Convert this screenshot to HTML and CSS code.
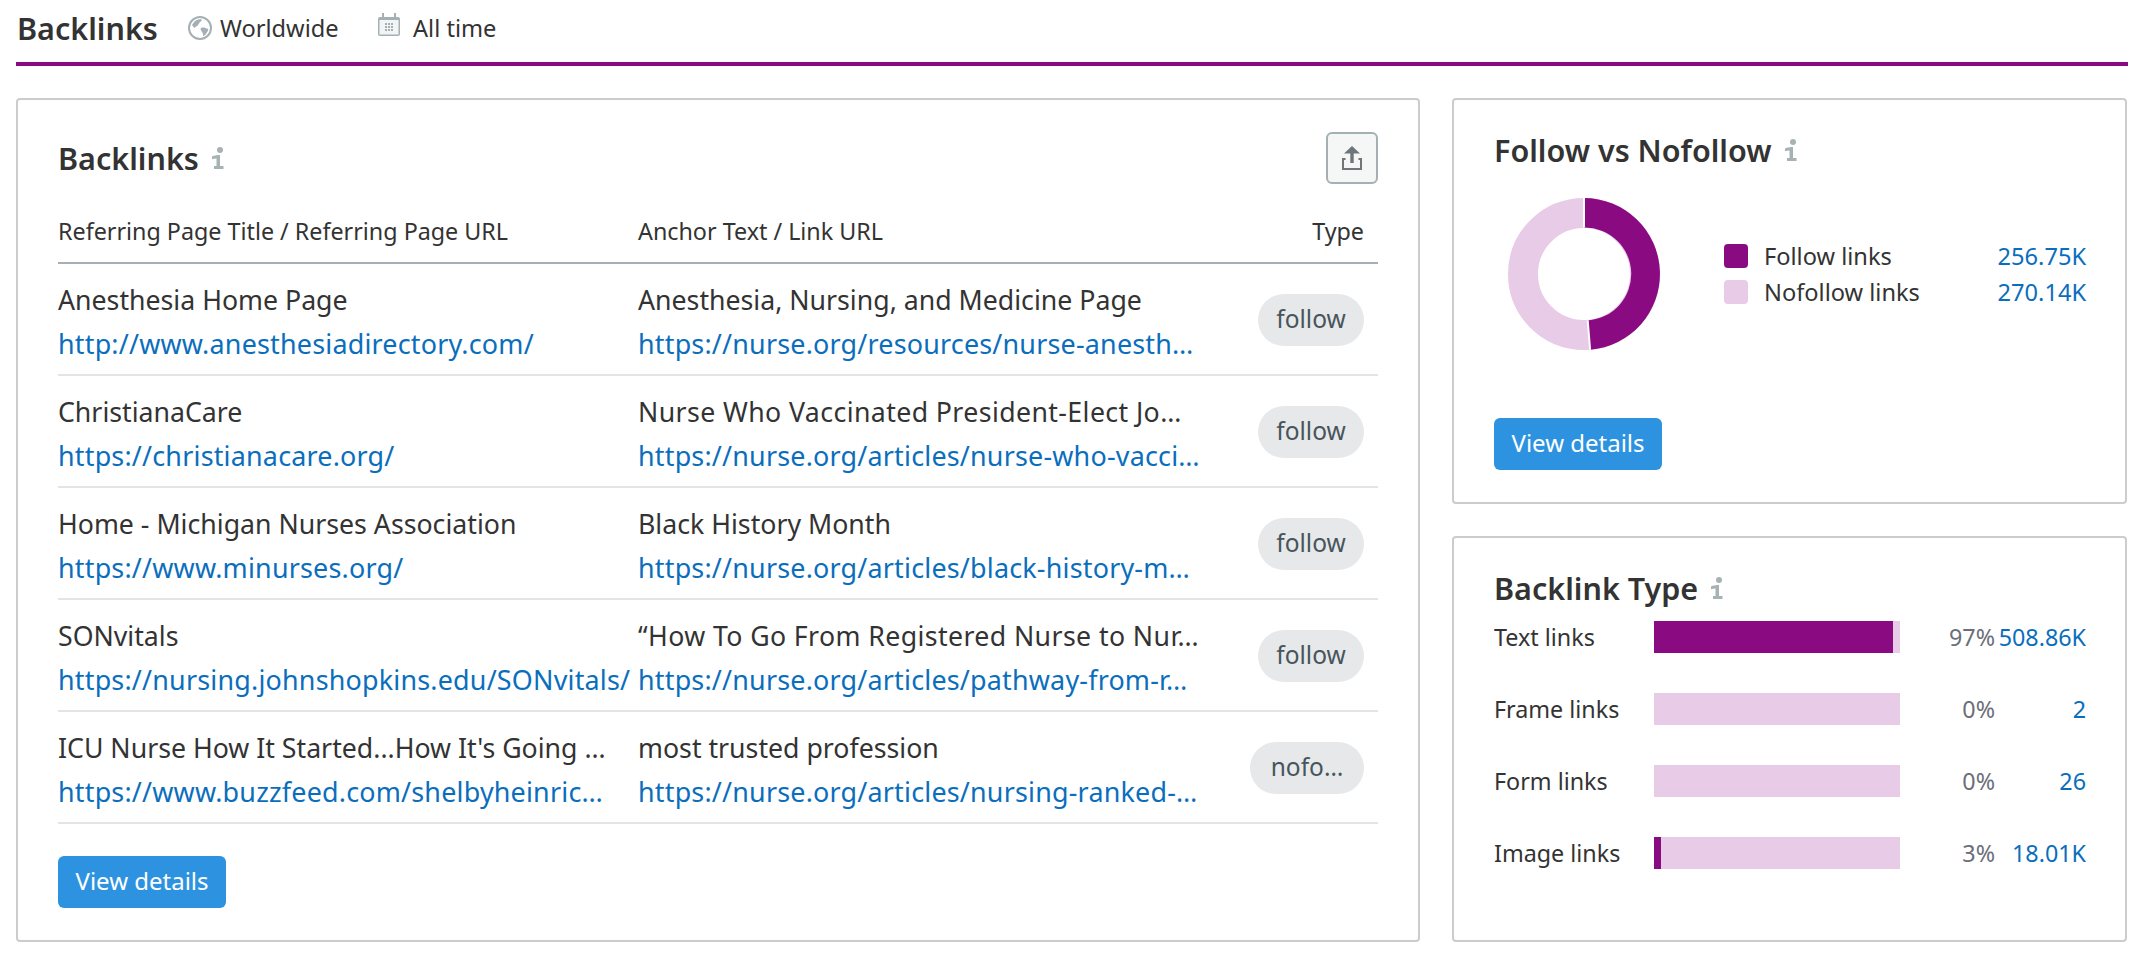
FILE: index.html
```html
<!DOCTYPE html>
<html lang="en">
<head>
<meta charset="utf-8">
<title>Backlinks</title>
<link rel="stylesheet" href="styles.css">
</head>
<body>
<header class="topbar">
  <h1 class="topbar-title">Backlinks</h1>
  <div class="topbar-item topbar-world">
    <svg class="icon-globe" viewBox="0 0 24 24"><circle cx="12" cy="12" r="11" fill="#fff" stroke="#a4b0b3" stroke-width="2"/><path d="M4 9c2-4 5-6 9-6 1 1 1 2-1 3-1 1-1 2-2 3-1 2-3 1-3 3-1 0-2-2-3-3zM13 12c2-1 5 0 7 1 1 1-1 3-2 5-1 1-2 2-3 2 0-2 0-3-1-4-1-2-2-3-1-4z" fill="#a4b0b3"/></svg>
    <span>Worldwide</span>
  </div>
  <div class="topbar-item topbar-time">
    <svg class="icon-cal" viewBox="0 0 22 23"><path d="M2 4h18a2 2 0 0 1 2 2v15a2 2 0 0 1-2 2H2a2 2 0 0 1-2-2V6a2 2 0 0 1 2-2z" fill="#a4b0b3"/><rect x="1.5" y="7" width="19" height="14.5" fill="#f3f5f5"/><rect x="4" y="0" width="2" height="6" fill="#a4b0b3"/><rect x="16" y="0" width="2" height="6" fill="#a4b0b3"/><path d="M7 10h2v2H7zm3 0h2v2h-2zm3 0h2v2h-2zM7 13h2v2H7zm3 0h2v2h-2zm3 0h2v2h-2zM7 16h2v2H7zm3 0h2v2h-2zm3 0h2v2h-2z" fill="#a4b0b3"/></svg>
    <span>All time</span>
  </div>
</header>

<main class="layout">
  <section class="card card-main">
    <div class="main-head">
      <h2 class="card-title">Backlinks <svg class="icon-info" viewBox="0 0 13 22"><circle cx="9" cy="3" r="3"/><path d="M1 9.500c2-1 5-1.500 8-1.500v11h3.500v3H3v-3h2.500v-7.500c-1.500 0-3 .3-4.500.8z"/></svg></h2>
      <button class="export" type="button" aria-label="Export">
        <svg viewBox="0 0 20 24"><path d="M10 0l8 7.500h-6.300V17H8.300V7.500H2z" fill="#6e7679"/><path d="M0 12h3.500v2H2v8h16v-8h-1.500v-2H20v12H0z" fill="#6e7679"/></svg>
      </button>
    </div>
    <div class="thead">
      <div>Referring Page Title / Referring Page URL</div>
      <div>Anchor Text / Link URL</div>
      <div class="col-type">Type</div>
    </div>
    <div class="row">
      <div class="cell"><div class="title">Anesthesia Home Page</div><a class="url">http://www.anesthesiadirectory.com/</a></div>
      <div class="cell"><div class="title">Anesthesia, Nursing, and Medicine Page</div><a class="url">https://nurse.org/resources/nurse-anesth…</a></div>
      <div class="col-type"><span class="pill">follow</span></div>
    </div>
    <div class="row">
      <div class="cell"><div class="title">ChristianaCare</div><a class="url">https://christianacare.org/</a></div>
      <div class="cell"><div class="title title-wide">Nurse Who Vaccinated President-Elect Jo…</div><a class="url">https://nurse.org/articles/nurse-who-vacci…</a></div>
      <div class="col-type"><span class="pill">follow</span></div>
    </div>
    <div class="row">
      <div class="cell"><div class="title">Home - Michigan Nurses Association</div><a class="url">https://www.minurses.org/</a></div>
      <div class="cell"><div class="title">Black History Month</div><a class="url">https://nurse.org/articles/black-history-m…</a></div>
      <div class="col-type"><span class="pill">follow</span></div>
    </div>
    <div class="row">
      <div class="cell"><div class="title">SONvitals</div><a class="url">https://nursing.johnshopkins.edu/SONvitals/</a></div>
      <div class="cell"><div class="title title-wide">“How To Go From Registered Nurse to Nur…</div><a class="url">https://nurse.org/articles/pathway-from-r…</a></div>
      <div class="col-type"><span class="pill">follow</span></div>
    </div>
    <div class="row">
      <div class="cell"><div class="title">ICU Nurse How It Started...How It's Going …</div><a class="url">https://www.buzzfeed.com/shelbyheinric…</a></div>
      <div class="cell"><div class="title">most trusted profession</div><a class="url">https://nurse.org/articles/nursing-ranked-…</a></div>
      <div class="col-type"><span class="pill pill-wide">nofo…</span></div>
    </div>
    <a class="btn btn-main">View details</a>
  </section>

  <div class="side">
    <section class="card card-follow">
      <h2 class="card-title">Follow vs Nofollow <svg class="icon-info" viewBox="0 0 13 22"><circle cx="9" cy="3" r="3"/><path d="M1 9.500c2-1 5-1.500 8-1.500v11h3.500v3H3v-3h2.500v-7.500c-1.500 0-3 .3-4.500.8z"/></svg></h2>
      <div class="follow-body">
        <svg class="donut" viewBox="0 0 152 152">
          <circle cx="76" cy="76" r="61" fill="none" stroke="#e8cbe6" stroke-width="30"/>
          <path d="M76 0A76 76 0 0 1 82.100 151.750L79.700 122.400A46.500 46.500 0 0 0 76 29.500Z" fill="#8a0a82"/>
          <path d="M76 0V29.500M82.100 151.750L79.700 122.400" stroke="#fff" stroke-width="2"/>
        </svg>
        <ul class="legend">
          <li><i class="swatch swatch-dark"></i><span class="legend-name">Follow links</span><a class="value">256.75K</a></li>
          <li><i class="swatch swatch-light"></i><span class="legend-name">Nofollow links</span><a class="value">270.14K</a></li>
        </ul>
      </div>
      <a class="btn">View details</a>
    </section>

    <section class="card card-type">
      <h2 class="card-title">Backlink Type <svg class="icon-info" viewBox="0 0 13 22"><circle cx="9" cy="3" r="3"/><path d="M1 9.500c2-1 5-1.500 8-1.500v11h3.500v3H3v-3h2.500v-7.500c-1.500 0-3 .3-4.500.8z"/></svg></h2>
      <div class="types">
        <div class="type-row"><span>Text links</span><div class="bar"><div class="bar-fill" style="width:97%"></div></div><span class="pct">97%</span><a class="value">508.86K</a></div>
        <div class="type-row"><span>Frame links</span><div class="bar"></div><span class="pct">0%</span><a class="value">2</a></div>
        <div class="type-row"><span>Form links</span><div class="bar"></div><span class="pct">0%</span><a class="value">26</a></div>
        <div class="type-row"><span>Image links</span><div class="bar"><div class="bar-fill" style="width:3%"></div></div><span class="pct">3%</span><a class="value">18.01K</a></div>
      </div>
    </section>
  </div>
</main>
</body>
</html>
```
FILE: styles.css
```css
* { box-sizing: border-box; }
html, body { margin: 0; padding: 0; background: #fff; }
body {
  width: 2152px;
  height: 962px;
  overflow: hidden;
  padding: 0 24px 0 16px;
  font-family: "Noto Sans", "Open Sans", sans-serif;
  font-size: 23.3px;
  color: #333;
}
h1, h2, ul { margin: 0; padding: 0; }
ul { list-style: none; }

.topbar {
  height: 66px;
  border-bottom: 4px solid #8a0a82;
  display: flex;
  align-items: center;
  padding: 0 0 6px 1px;
}
.topbar-title { font-size: 30.500px; font-weight: 600; width: 171px; }
.topbar-item { display: flex; align-items: center; font-size: 23.6px; }
.topbar-world { gap: 8px; width: 190px; }
.topbar-time { gap: 13px; }
.icon-globe { width: 24px; height: 24px; }
.icon-cal { width: 22px; height: 23px; margin-top: -8px; }

.layout {
  display: grid;
  grid-template-columns: 1404px 675px;
  gap: 32px;
  margin-top: 32px;
  height: 844px;
}
.card {
  border: 2px solid #cbcdcd;
  border-radius: 4px;
  background: #fff;
}
.card-main { padding: 32px 40px 0 40px; }
.card-title {
  font-size: 30.500px;
  font-weight: 600;
  line-height: 40px;
  display: flex;
  align-items: center;
  gap: 12px;
}
.icon-info { width: 13px; height: 22px; fill: #a7b2b5; }

.main-head { display: flex; justify-content: space-between; align-items: center; height: 52px; }
.export {
  width: 52px;
  height: 52px;
  padding: 0;
  border: 2px solid #a4b0b3;
  border-radius: 6px;
  background: #f5f7f7;
  display: flex;
  align-items: center;
  justify-content: center;
}
.export svg { width: 20px; height: 24px; }

.thead, .row {
  display: grid;
  grid-template-columns: 580px 1fr 130px;
  align-items: center;
}
.thead {
  height: 80px;
  border-bottom: 2px solid #a4b0b3;
  padding-top: 15px;
}
.col-type { text-align: right; padding-right: 14px; }
.row { height: 112px; border-bottom: 2px solid #e2e5e6; }
.row .col-type { display: flex; justify-content: flex-end; padding-top: 2px; }
.cell { min-width: 0; white-space: nowrap; overflow: hidden; padding-top: 6px; }
.title { font-size: 26.7px; line-height: 44px; }
.title-wide { letter-spacing: 0.4px; }
.url { display: block; font-size: 26.9px; line-height: 44px; color: #0a6ebd; letter-spacing: 0.2px; }

.pill {
  display: block;
  width: 106px;
  height: 52px;
  line-height: 50px;
  text-align: center;
  border-radius: 26px;
  background: #e6e8e9;
  color: #46555c;
  font-size: 24.5px;
}
.pill-wide { width: 114px; }

.btn {
  display: inline-block;
  height: 52px;
  line-height: 50px;
  padding: 0 17.500px;
  border-radius: 6px;
  background: #2d93e0;
  color: #fff;
  font-size: 24px;
}
.btn-main { margin-top: 32px; }

.side { display: grid; grid-template-rows: 406px 406px; gap: 32px; }
.card-follow { padding: 30px 39px 0 40px; }
.follow-body { display: flex; align-items: center; height: 152px; margin-top: 28px; }
.donut { width: 152px; height: 152px; margin-left: 14px; }
.legend { flex: 1; margin-left: 64px; font-size: 23.6px; }
.legend li { display: flex; align-items: center; height: 36px; }
.swatch { width: 24px; height: 24px; border-radius: 4px; margin-right: 16px; }
.swatch-dark { background: #8a0a82; }
.swatch-light { background: #e8cbe6; }
.legend-name { flex: 1; }
.value { color: #0a6ebd; text-align: right; }
.card-follow .btn { margin-top: 68px; }

.card-type { padding: 30px 39px 0 40px; }
.types { margin-top: 13px; }
.type-row {
  display: grid;
  grid-template-columns: 160px 246px 95px 91px;
  align-items: center;
  height: 32px;
  margin-bottom: 40px;
}
.bar { height: 32px; background: #e8cbe6; }
.bar-fill { height: 100%; background: #8a0a82; }
.pct { text-align: right; color: #6c6e79; }
```
